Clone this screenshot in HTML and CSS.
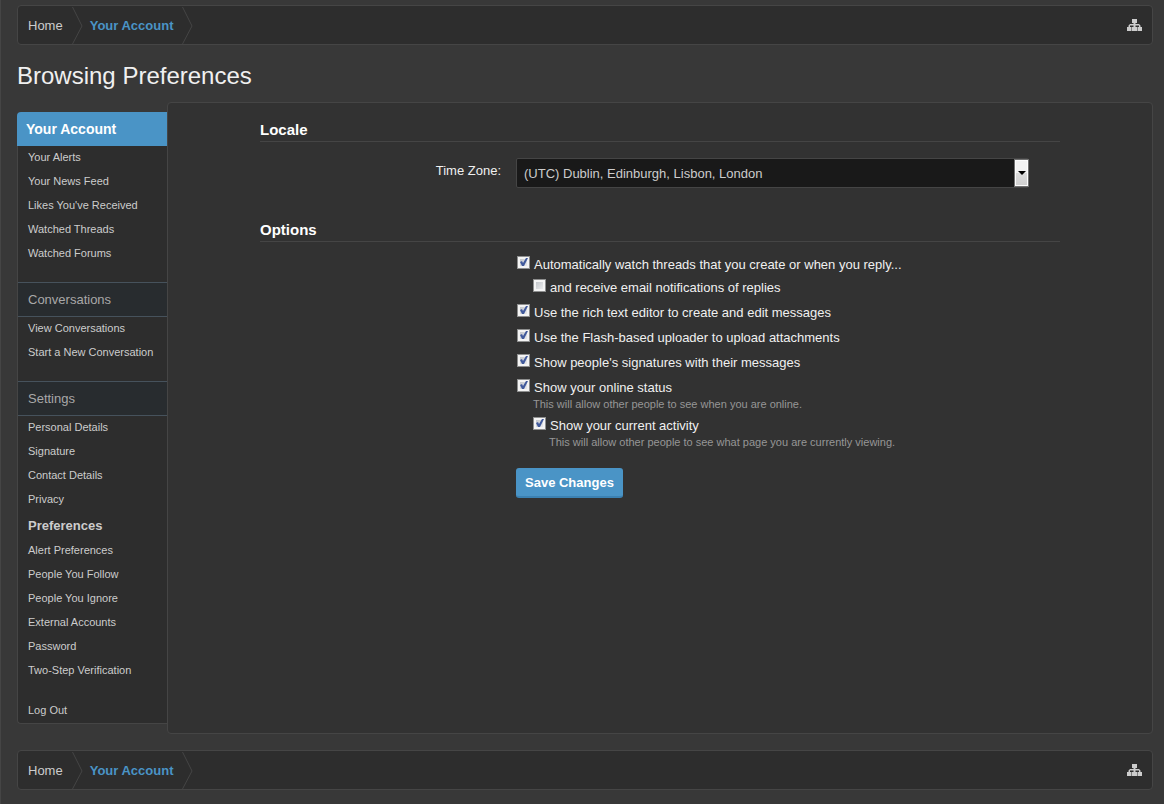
FILE: index.html
```html
<!DOCTYPE html>
<html lang="en">
<head>
    <meta charset="UTF-8">
    <meta name="viewport" content="width=device-width, initial-scale=1.0">
    <title>Browsing Preferences</title>
    <link rel="stylesheet" href="styles.css">
</head>
<body>
    <!-- Breadcrumb -->
    <nav class="breadcrumb" aria-label="Breadcrumb">
        <a href="#" class="crumb">Home</a>
        <svg class="crumb-arrow" viewBox="0 0 11 38"><path d="M0.5 1L10 20L0.5 38"/></svg>
        <a href="#" class="crumb current">Your Account</a>
        <svg class="crumb-arrow" viewBox="0 0 11 38"><path d="M0.5 1L10 20L0.5 38"/></svg>
        <a href="#" class="sitemap" aria-label="Open quick navigation">
            <svg viewBox="0 0 15 12">
                <path d="M5 0h5v4H8.5v1H12l1.5 1.5V8H15v4h-4.500V8H12V6.500H8.500V8H10v4H5V8h1.500V6.500H3V8h1.500v4H0V8h1.500V6.500L3 5h3.500V4H5z"/>
            </svg>
        </a>
    </nav>

    <h1 class="page-title">Browsing Preferences</h1>

    <div class="container">
        <!-- Account navigation -->
        <aside class="sidebar">
            <h2 class="sidebar-title">Your Account</h2>
            <ul class="menu">
                <li><a href="#">Your Alerts</a></li>
                <li><a href="#">Your News Feed</a></li>
                <li><a href="#">Likes You've Received</a></li>
                <li><a href="#">Watched Threads</a></li>
                <li><a href="#">Watched Forums</a></li>
            </ul>
            <h3 class="menu-heading">Conversations</h3>
            <ul class="menu">
                <li><a href="#">View Conversations</a></li>
                <li><a href="#">Start a New Conversation</a></li>
            </ul>
            <h3 class="menu-heading">Settings</h3>
            <ul class="menu">
                <li><a href="#">Personal Details</a></li>
                <li><a href="#">Signature</a></li>
                <li><a href="#">Contact Details</a></li>
                <li><a href="#">Privacy</a></li>
                <li><a href="#" class="selected">Preferences</a></li>
                <li><a href="#">Alert Preferences</a></li>
                <li><a href="#">People You Follow</a></li>
                <li><a href="#">People You Ignore</a></li>
                <li><a href="#">External Accounts</a></li>
                <li><a href="#">Password</a></li>
                <li><a href="#">Two-Step Verification</a></li>
            </ul>
            <ul class="menu last">
                <li><a href="#">Log Out</a></li>
            </ul>
        </aside>

        <!-- Preferences form -->
        <main class="content">
            <form class="pref-form">
                <h3 class="section-heading">Locale</h3>
                <div class="form-row">
                    <label class="row-label" for="timezone">Time Zone:</label>
                    <div class="select-wrap">
                        <select id="timezone">
                            <option>(UTC) Dublin, Edinburgh, Lisbon, London</option>
                        </select>
                        <span class="select-arrow"></span>
                    </div>
                </div>

                <h3 class="section-heading">Options</h3>
                <div class="form-row options-row">
                    <div class="options">
                        <label class="option"><input type="checkbox" checked>Automatically watch threads that you create or when you reply...</label>
                        <label class="option sub"><input type="checkbox">and receive email notifications of replies</label>
                        <label class="option"><input type="checkbox" checked>Use the rich text editor to create and edit messages</label>
                        <label class="option"><input type="checkbox" checked>Use the Flash-based uploader to upload attachments</label>
                        <label class="option"><input type="checkbox" checked>Show people's signatures with their messages</label>
                        <label class="option has-hint"><input type="checkbox" checked>Show your online status</label>
                        <p class="hint">This will allow other people to see when you are online.</p>
                        <label class="option sub has-hint"><input type="checkbox" checked>Show your current activity</label>
                        <p class="hint sub">This will allow other people to see what page you are currently viewing.</p>
                        <button type="submit" class="save-btn">Save Changes</button>
                    </div>
                </div>
            </form>
        </main>
    </div>

    <!-- Bottom breadcrumb -->
    <nav class="breadcrumb" aria-label="Breadcrumb">
        <a href="#" class="crumb">Home</a>
        <svg class="crumb-arrow" viewBox="0 0 11 38"><path d="M0.5 1L10 20L0.5 38"/></svg>
        <a href="#" class="crumb current">Your Account</a>
        <svg class="crumb-arrow" viewBox="0 0 11 38"><path d="M0.5 1L10 20L0.5 38"/></svg>
        <a href="#" class="sitemap" aria-label="Open quick navigation">
            <svg viewBox="0 0 15 12">
                <path d="M5 0h5v4H8.5v1H12l1.5 1.5V8H15v4h-4.500V8H12V6.500H8.500V8H10v4H5V8h1.500V6.500H3V8h1.500v4H0V8h1.500V6.500L3 5h3.500V4H5z"/>
            </svg>
        </a>
    </nav>
</body>
</html>
```
FILE: styles.css
```css
* {
    margin: 0;
    padding: 0;
    box-sizing: border-box;
}

body {
    font-family: "Liberation Sans", Arial, sans-serif;
    font-size: 13px;
    background: #383838;
    color: #f0f0f0;
    min-height: 100vh;
    border-left: 1px solid #454545;
    padding: 5px 11px 14px 16px;
}

a {
    color: #cccccc;
    text-decoration: none;
}

a:hover {
    text-decoration: underline;
}

/* Breadcrumb */
.breadcrumb {
    display: flex;
    align-items: center;
    height: 40px;
    background: #2d2d2d;
    border: 1px solid #454545;
    border-radius: 4px;
}

.crumb {
    padding: 0 9px 0 10px;
}

.crumb.current {
    padding-left: 7px;
    color: #4a94c6;
    font-weight: bold;
}

.crumb-arrow {
    width: 11px;
    height: 38px;
    fill: none;
    stroke: #454545;
}

.sitemap {
    margin-left: auto;
    padding-right: 10px;
}

.sitemap svg {
    display: block;
    width: 15px;
    height: 12px;
    fill: #cccccc;
}

.page-title {
    font-size: 24px;
    font-weight: normal;
    line-height: 28px;
    margin: 17px 0 12px;
}

.container {
    display: flex;
    align-items: flex-start;
    margin-bottom: 16px;
}

/* Sidebar */
.sidebar {
    flex: 0 0 150px;
    margin-top: 10px;
    background: #2d2d2d;
    border: 1px solid #454545;
    border-width: 0 0 1px 1px;
    border-radius: 4px 0 0 4px;
}

.sidebar-title {
    margin-left: -1px;
    padding-left: 9px;
    background: #4a94c6;
    border-radius: 4px 0 0 0;
    color: #ffffff;
    font-size: 14px;
    line-height: 34px;
}

.menu {
    list-style: none;
    padding-bottom: 16px;
}

.menu.last {
    padding-bottom: 0;
}

.menu a {
    display: block;
    padding: 0 0 2px 10px;
    font-size: 11px;
    line-height: 22px;
}

.menu a.selected {
    padding-bottom: 0;
    font-size: 13px;
    font-weight: bold;
    line-height: 27px;
}

.menu-heading {
    padding-left: 10px;
    background: #282c2f;
    border: 1px solid #46525c;
    border-width: 1px 0;
    color: #a8a8a8;
    font-size: 13px;
    font-weight: normal;
    line-height: 33px;
}

/* Form */
.content {
    flex: 1;
    min-height: 632px;
    padding: 16px 20px;
    background: #323232;
    border: 1px solid #454545;
    border-radius: 4px;
}

.pref-form {
    max-width: 800px;
    margin: 0 auto;
}

.section-heading {
    color: #ffffff;
    font-size: 15px;
    line-height: 22px;
    border-bottom: 1px solid #454545;
}

.form-row {
    display: flex;
    margin: 16px 0 31px;
}

.row-label {
    width: 256px;
    padding-right: 15px;
    line-height: 26px;
    text-align: right;
}

.select-wrap {
    position: relative;
    flex: 0 1 513px;
}

.select-wrap select {
    appearance: none;
    display: block;
    width: 100%;
    height: 30px;
    padding: 0 20px 0 7px;
    background: #191919;
    border: 1px solid #454545;
    border-radius: 2px;
    color: #cccccc;
    font: inherit;
}

.select-arrow {
    position: absolute;
    top: 1px;
    right: 0;
    width: 15px;
    height: 28px;
    background: linear-gradient(#f2f2f2 50%, #dddddd 50%, #cfcfcf);
    border: 1px solid #707070;
    box-shadow: inset 0 0 0 1px #fcfcfc;
    pointer-events: none;
}

.select-arrow::after {
    content: "";
    position: absolute;
    top: 11px;
    left: 3px;
    border: 4px solid transparent;
    border-top-color: #000000;
    border-bottom: 0;
}

.options-row {
    margin: 10px 0 0;
    padding-left: 256px;
}

.option {
    display: flex;
    align-items: flex-start;
    gap: 4px;
    padding: 4px 0 4px 1px;
    line-height: 17px;
}

.option.sub,
.hint {
    padding-left: 17px;
}

.option.sub {
    padding-top: 2px;
}

.option.has-hint {
    padding-bottom: 2px;
}

.option input {
    appearance: none;
    flex: none;
    width: 13px;
    height: 13px;
    background: linear-gradient(135deg, #b8bcc2, #f4f4f4);
    border: 1px solid #8e8f8f;
    box-shadow: inset 0 0 0 2px #f4f4f4;
}

.option input:checked::before {
    content: "";
    display: block;
    width: 11px;
    height: 11px;
    background: #415a9c;
    clip-path: polygon(2px 5px, 4px 4px, 5px 6px, 8px 1px, 10px 1px, 6px 9px, 4px 9px);
}

.hint {
    margin-bottom: 5px;
    color: #969696;
    font-size: 11px;
    line-height: 12px;
}

.hint.sub {
    padding-left: 33px;
}

.save-btn {
    margin-top: 15px;
    padding: 0 9px;
    height: 30px;
    background: #4a94c6;
    border: 0;
    border-bottom: 2px solid #3b81b2;
    border-radius: 3px;
    color: #ffffff;
    font: bold 13px "Liberation Sans", Arial, sans-serif;
    cursor: pointer;
}
```
